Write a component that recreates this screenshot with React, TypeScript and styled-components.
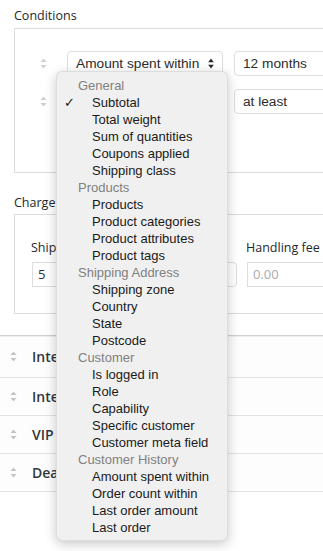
import React from 'react';
import styled, { createGlobalStyle } from 'styled-components';

const GlobalStyle = createGlobalStyle`
  html, body {
    margin: 0;
    padding: 0;
    background: #ffffff;
    overflow: hidden;
  }
  body {
    font-family: 'Open Sans', 'Liberation Sans', sans-serif;
    color: #32373c;
  }
`;

const Page = styled.div`
  position: relative;
  width: 323px;
  height: 551px;
  overflow: hidden;
`;

const Heading = styled.div<{ $top: number }>`
  margin: ${(p) => p.$top}px 0 0 14px;
  height: 18px;
  line-height: 18px;
  font-size: 12.5px;
  color: #23282d;
`;

const Panel = styled.div`
  margin-left: 14px;
  width: 340px;
  border: 1px solid #dcdcdc;
  background: #ffffff;
`;

const ConditionsPanel = styled(Panel)`
  margin-top: 3px;
  padding: 22px 0 58px 0;
  display: flex;
  flex-direction: column;
  gap: 13px;
`;

const ConditionRow = styled.div`
  display: flex;
  align-items: center;
  height: 25px;
  padding-left: 25px;
`;

const HandleWrap = styled.span`
  display: flex;
  width: 7px;
  margin-right: 20px;
`;

const Select = styled.div<{ $width: number }>`
  box-sizing: border-box;
  display: flex;
  align-items: center;
  justify-content: space-between;
  width: ${(p) => p.$width}px;
  height: 25px;
  padding: 0 8px 0 8px;
  border: 1px solid #dedede;
  border-radius: 4px;
  background: #ffffff;
  font-family: 'Liberation Sans', Arial, sans-serif;
  font-size: 13.7px;
  color: #2c2c2c;
  white-space: nowrap;
  flex-shrink: 0;
`;

const Spacer = styled.span<{ $w: number }>`
  width: ${(p) => p.$w}px;
  flex-shrink: 0;
`;

const ChargesPanel = styled(Panel)`
  margin-top: 2px;
  padding: 24px 0 26px 17px;
  display: flex;
  gap: 10px;
`;

const Field = styled.div`
  display: flex;
  flex-direction: column;
  gap: 5px;
`;

const FieldLabel = styled.div`
  height: 18px;
  line-height: 18px;
  font-size: 12.5px;
  color: #23282d;
  margin-left: -1px;
`;

const Inputs = styled.div`
  display: flex;
  gap: 6px;
`;

const Input = styled.div<{ $width: number; $placeholder?: boolean }>`
  box-sizing: border-box;
  width: ${(p) => p.$width}px;
  height: 25px;
  line-height: 23px;
  padding: 0 5px;
  border: 1px solid #dddddd;
  background: #ffffff;
  font-family: 'Open Sans', sans-serif;
  font-size: 13px;
  color: ${(p) => (p.$placeholder ? '#a7aaad' : '#2c3338')};
`;

const Table = styled.div`
  margin-top: 21px;
  border-top: 1px solid #cfcfcf;
`;

const MethodRow = styled.div`
  display: flex;
  align-items: center;
  height: 37px;
  padding-left: 10px;
  border-bottom: 1px solid #e2e2e2;
  background: #fdfdfd;
  &:first-child {
    height: 41px;
    box-shadow: inset 0 1px 0 #efefef;
  }
`;

const MethodHandle = styled.span`
  display: flex;
  width: 7px;
  margin-right: 15px;
`;

const MethodName = styled.span`
  font-family: 'Open Sans', sans-serif;
  font-size: 14px;
  font-weight: 600;
  color: #32373c;
`;

const Menu = styled.div`
  position: absolute;
  left: 56px;
  top: 71px;
  width: 172px;
  padding: 5px 0 4px;
  background: #f0f0f0;
  border-radius: 6px;
  border: 0.5px solid rgba(0, 0, 0, 0.08);
  box-shadow: 0 3px 12px rgba(0, 0, 0, 0.22);
  font-family: 'Liberation Sans', Arial, sans-serif;
  font-size: 13px;
  box-sizing: border-box;
`;

const GroupLabel = styled.div`
  height: 17px;
  line-height: 17px;
  padding-left: 21px;
  color: #808080;
`;

const MenuItem = styled.div`
  position: relative;
  height: 17px;
  line-height: 17px;
  padding-left: 35px;
  color: #1a1a1a;
`;

const Check = styled.span`
  position: absolute;
  left: 7px;
  top: 0;
  font-family: 'DejaVu Sans', sans-serif;
  font-size: 13px;
  color: #1a1a1a;
`;

const SortHandle = ({ color }: { color: string }) => (
  <svg width="7" height="11" viewBox="0 0 7 11">
    <path d="M3.5 0.5 L6.5 4 L0.5 4 Z" fill={color} />
    <path d="M3.5 10.5 L6.5 7 L0.5 7 Z" fill={color} />
  </svg>
);

const SelectArrows = () => (
  <svg width="6" height="11" viewBox="0 0 6 11">
    <path d="M3 0.5 L5.8 4.3 L0.2 4.3 Z" fill="#2a2a2a" />
    <path d="M3 10.5 L5.8 6.7 L0.2 6.7 Z" fill="#2a2a2a" />
  </svg>
);

const MENU: { group: string; items: string[] }[] = [
  { group: 'General', items: ['Subtotal', 'Total weight', 'Sum of quantities', 'Coupons applied', 'Shipping class'] },
  { group: 'Products', items: ['Products', 'Product categories', 'Product attributes', 'Product tags'] },
  { group: 'Shipping Address', items: ['Shipping zone', 'Country', 'State', 'Postcode'] },
  { group: 'Customer', items: ['Is logged in', 'Role', 'Capability', 'Specific customer', 'Customer meta field'] },
  { group: 'Customer History', items: ['Amount spent within', 'Order count within', 'Last order amount', 'Last order'] },
];

const METHODS = ['International', 'International', 'VIP', 'Deal of the day'];

export default function App() {
  return (
    <Page>
      <GlobalStyle />
      <Heading $top={7}>Conditions</Heading>
      <ConditionsPanel>
        <ConditionRow>
          <HandleWrap>
            <SortHandle color="#cfcfcf" />
          </HandleWrap>
          <Select $width={156}>
            <span>Amount spent within</span>
            <SelectArrows />
          </Select>
          <Spacer $w={11} />
          <Select $width={120}>
            <span>12 months</span>
          </Select>
        </ConditionRow>
        <ConditionRow>
          <HandleWrap>
            <SortHandle color="#cfcfcf" />
          </HandleWrap>
          <Select $width={156}>
            <span>Subtotal</span>
            <SelectArrows />
          </Select>
          <Spacer $w={11} />
          <Select $width={120}>
            <span>at least</span>
          </Select>
        </ConditionRow>
      </ConditionsPanel>

      <Heading $top={21}>Charges</Heading>
      <ChargesPanel>
        <Field>
          <FieldLabel>Shipping cost</FieldLabel>
          <Inputs>
            <Input $width={96}>5</Input>
            <Select $width={103}>
              <span>per order</span>
              <SelectArrows />
            </Select>
          </Inputs>
        </Field>
        <Field>
          <FieldLabel>Handling fee</FieldLabel>
          <Input $width={120} $placeholder>
            0.00
          </Input>
        </Field>
      </ChargesPanel>

      <Table>
        {METHODS.map((name, i) => (
          <MethodRow key={i}>
            <MethodHandle>
              <SortHandle color="#c4c4c4" />
            </MethodHandle>
            <MethodName>{name}</MethodName>
          </MethodRow>
        ))}
      </Table>

      <Menu>
        {MENU.map((g) => (
          <React.Fragment key={g.group}>
            <GroupLabel>{g.group}</GroupLabel>
            {g.items.map((item, idx) => (
              <MenuItem key={g.group + item}>
                {g.group === 'General' && idx === 0 && <Check>✓</Check>}
                {item}
              </MenuItem>
            ))}
          </React.Fragment>
        ))}
      </Menu>
    </Page>
  );
}
